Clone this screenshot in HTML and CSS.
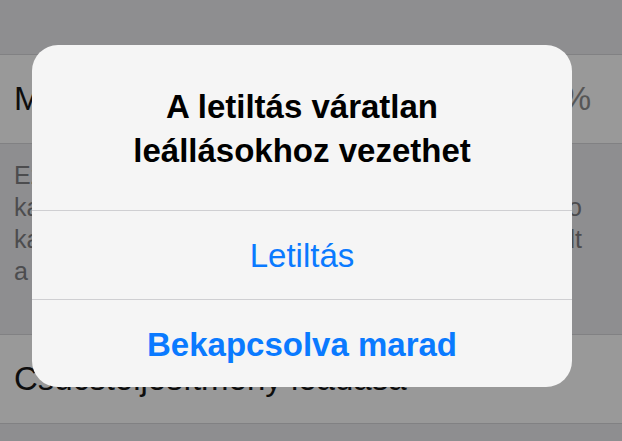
FILE: index.html
```html
<!DOCTYPE html>
<html lang="hu">
<head>
  <meta charset="UTF-8" />
  <meta name="viewport" content="width=device-width, initial-scale=1.0"/>
  <title>Akkumulátor állapota</title>
  <link rel="stylesheet" href="styles.css">
</head>
<body>

<div class="settings">
  <div class="section-gap"></div>
  <div class="row">
    <span>Maximális kapacitás</span>
    <span class="value">87%</span>
  </div>
  <div class="note">
    <span class="line">Ez az akkumulátor jelenlegi maximális</span>
    <span class="line full">kapacitása az újonnan vásárolt iPhone Pro</span>
    <span class="line full">kapacitásához képest, amely kezdetben 100% volt</span>
    <span class="line">a vásárláskor.</span>
  </div>
  <div class="row">
    <span>Csúcsteljesítmény leadása</span>
  </div>
</div>

<div class="alert">
  <div class="alert-title">A letiltás váratlan<br/>leállásokhoz vezethet</div>
  <div class="alert-btn">Letiltás</div>
  <div class="alert-btn bold">Bekapcsolva marad</div>
</div>

</body>
</html>
```

FILE: styles.css
```css
* { margin: 0; padding: 0; box-sizing: border-box; }
body {
  font-family: "Liberation Sans", Arial, sans-serif;
  background: #8e8e90; height: 100vh; overflow: hidden;
}
.section-gap { height: 55px; border-bottom: 1px solid #818183; }
.row {
  height: 89px; display: flex; align-items: center; justify-content: space-between;
  padding: 0 31px 0 14px; background: #999999;
  border-bottom: 1px solid #818183;
  font-size: 33px; color: #0e0e0e; white-space: nowrap;
}
.row .value { color: #565656; }
.note {
  height: 191px; padding: 15px 40px 0 14px;
  border-bottom: 1px solid #818183;
  font-size: 25px; line-height: 32px; color: #4c4c4e;
}
.note .line { display: block; white-space: nowrap; }
.note .line.full { text-align: justify; text-align-last: justify; }

.alert {
  position: absolute; left: 32px; top: 45px;
  width: 540px; height: 342px;
  background: #f5f5f5; border-radius: 26px; overflow: hidden;
}
.alert-title {
  padding: 40px 20px 37px; height: 165px;
  text-align: center; font-size: 33px; font-weight: 700;
  line-height: 44px; color: #000;
}
.alert-btn {
  height: 89px; display: flex; align-items: center; justify-content: center;
  border-top: 1px solid #cfcfd2;
  font-size: 33px; line-height: 33px; color: #0a7aff;
}
.alert-btn.bold { font-weight: 700; }
```
